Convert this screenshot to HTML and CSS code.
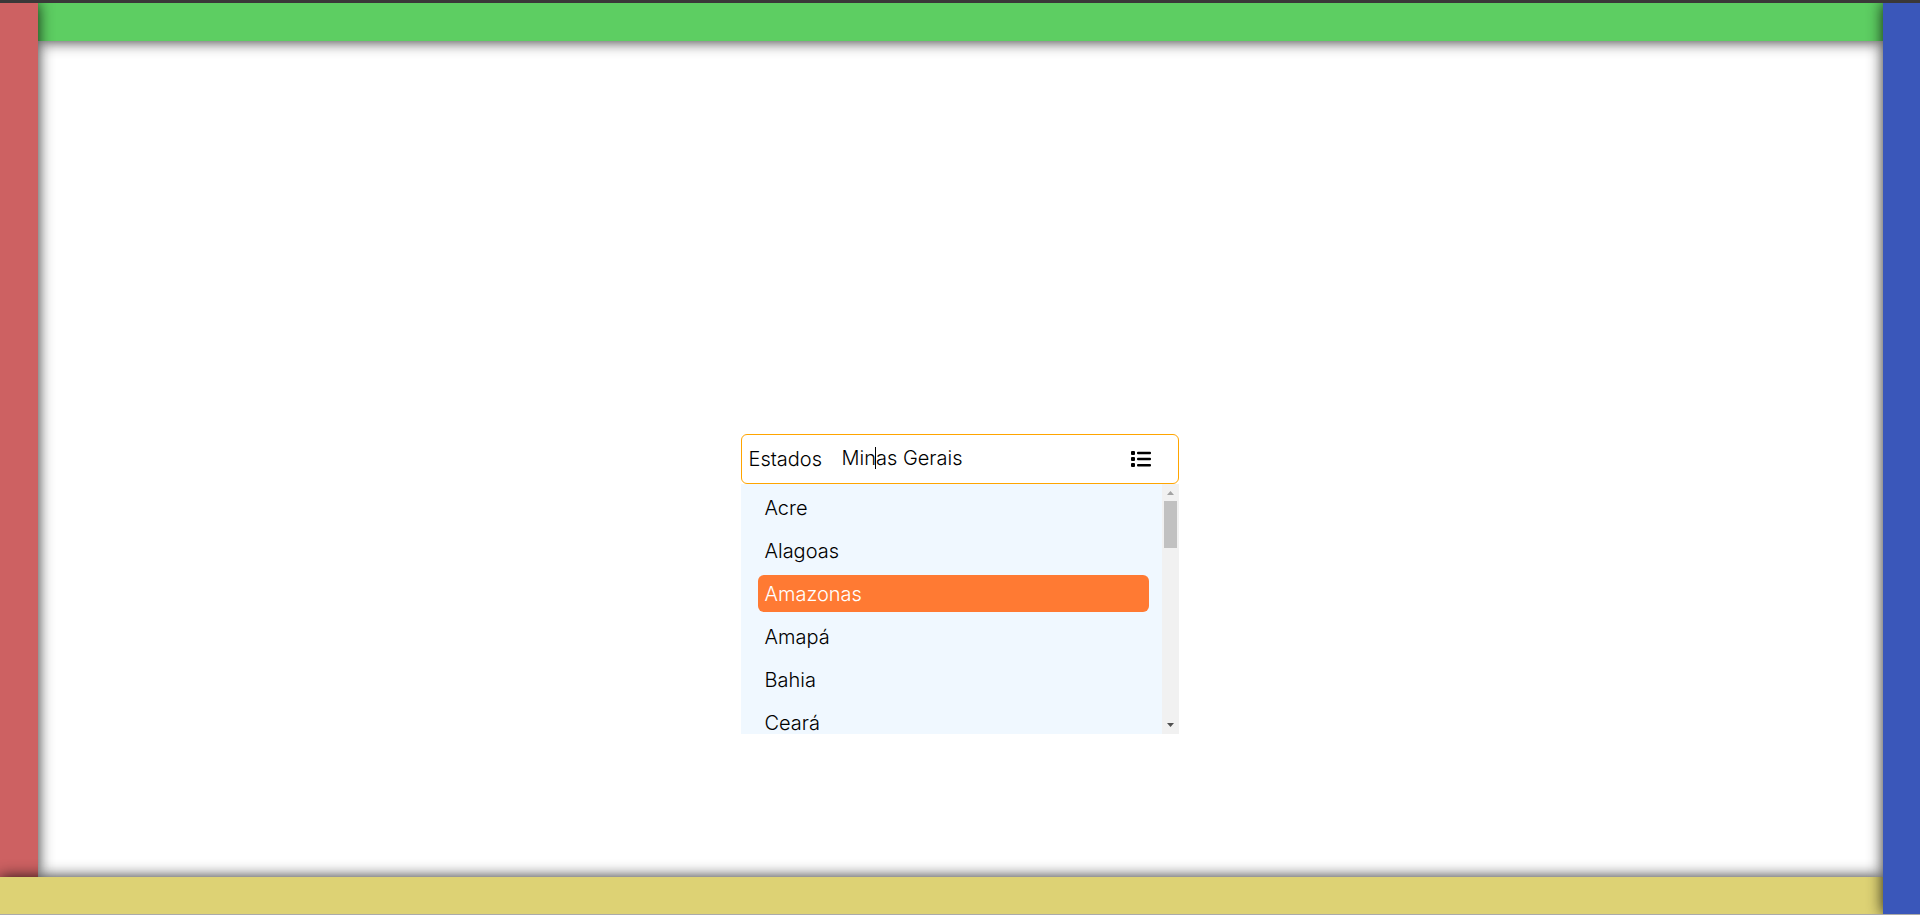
FILE: index.html
```html
<!DOCTYPE html>
<html lang="pt-BR">
<head>
<meta charset="utf-8">
<meta name="viewport" content="width=device-width, initial-scale=1">
<title>Estados</title>
<link rel="stylesheet" href="styles.css">
</head>
<body>
<div class="page">
  <div class="bar bar-top"></div>
  <div class="bar bar-left"></div>
  <main class="content">
    <div class="combo">
      <div class="field">
        <label class="label" for="estado">Estados</label>
        <div class="entry">
          <input class="input" id="estado" type="text" value="Minas Gerais" autocomplete="off">
          <span class="caret"></span>
        </div>
        <button class="toggle" type="button" aria-label="Abrir lista">
          <svg class="icon" viewBox="0 0 20 18" aria-hidden="true">
            <rect x="0" y="1" width="4" height="4" rx="1"/>
            <rect x="0" y="7" width="4" height="4" rx="1"/>
            <rect x="0" y="13" width="4" height="4" rx="1"/>
            <rect x="6" y="1.7" width="14" height="2.5" rx="1"/>
            <rect x="6" y="7.8" width="14" height="2.5" rx="1"/>
            <rect x="6" y="13.9" width="14" height="2.5" rx="1"/>
          </svg>
        </button>
      </div>
      <div class="dropdown">
        <ul class="list">
          <li class="item">Acre</li>
          <li class="item">Alagoas</li>
          <li class="item item-active">Amazonas</li>
          <li class="item">Amapá</li>
          <li class="item">Bahia</li>
          <li class="item">Ceará</li>
        </ul>
        <div class="scrollbar">
          <svg class="arrow" viewBox="0 0 17 17" aria-hidden="true"><path class="arrow-up" d="M5 11 8.500 7 12 11z"/></svg>
          <div class="track"><div class="thumb"></div></div>
          <svg class="arrow" viewBox="0 0 17 17" aria-hidden="true"><path class="arrow-down" d="M5 6 8.500 10 12 6z"/></svg>
        </div>
      </div>
    </div>
  </main>
  <div class="bar bar-bottom"></div>
  <div class="bar bar-right"></div>
</div>
</body>
</html>
```
FILE: styles.css
```css
* {
  box-sizing: border-box;
}

body {
  margin: 0;
  font-family: Inter, "Liberation Sans", sans-serif;
  font-size: 20px;
  font-weight: 300;
  color: #000;
  background: #fff;
}

.page {
  display: grid;
  grid-template-columns: 38px 1fr 37px;
  grid-template-rows: 38px 1fr 37px;
  height: 100vh;
  overflow: hidden;
  border-top: 3px solid #3a3838;
  border-bottom: 1px solid #aaa;
}

.bar {
  position: relative;
  box-shadow: 0 0 15px rgba(0, 0, 0, 0.85);
}

.bar-top {
  grid-area: 1 / 2 / 2 / 3;
  z-index: 1;
  background: #5dce62;
}

.bar-left {
  grid-area: 1 / 1 / 3 / 2;
  z-index: 2;
  background: #cd6162;
}

.bar-bottom {
  grid-area: 3 / 1 / 4 / 3;
  z-index: 3;
  background: #ddd274;
}

.bar-right {
  grid-area: 1 / 3 / 4 / 4;
  z-index: 4;
  background: #3a57ba;
}

.content {
  grid-area: 2 / 2 / 3 / 3;
  display: grid;
  place-items: center;
  padding-right: 2px;
}

.combo {
  position: relative;
  width: 438px;
}

.field {
  display: flex;
  align-items: center;
  height: 50px;
  padding: 0 27px 0 7px;
  border: 1px solid orange;
  border-radius: 6px;
  background: #fff;
}

.label {
  width: 93px;
}

.entry {
  position: relative;
  flex: 1;
  padding-bottom: 2px;
}

.input {
  width: 100%;
  padding: 0;
  border: 0;
  outline: 0;
  font: inherit;
  color: inherit;
  background: none;
}

.caret {
  position: absolute;
  top: 1px;
  left: 33px;
  width: 1px;
  height: 22px;
  background: #000;
}

.toggle {
  display: flex;
  padding: 0;
  border: 0;
  background: none;
}

.icon {
  width: 20px;
  height: 18px;
}

.dropdown {
  position: absolute;
  top: 100%;
  left: 0;
  display: flex;
  width: 100%;
  height: 250px;
  background: aliceblue;
}

.list {
  flex: 1;
  display: flex;
  flex-direction: column;
  gap: 6px;
  margin: 0;
  padding: 5px 13px 0 17px;
  overflow: hidden;
  list-style: none;
}

.item {
  flex: none;
  padding: 2px 7px 0;
  line-height: 35px;
  border-radius: 6px;
}

.item-active {
  color: #fff;
  background: #ff7a33;
}

.scrollbar {
  display: flex;
  flex-direction: column;
  width: 17px;
  background: #f1f1f1;
}

.arrow {
  width: 17px;
  height: 17px;
}

.arrow-up {
  fill: #a3a3a3;
}

.arrow-down {
  fill: #505050;
}

.track {
  flex: 1;
  padding: 0 2px;
}

.thumb {
  height: 47px;
  background: #c1c1c1;
}
```
